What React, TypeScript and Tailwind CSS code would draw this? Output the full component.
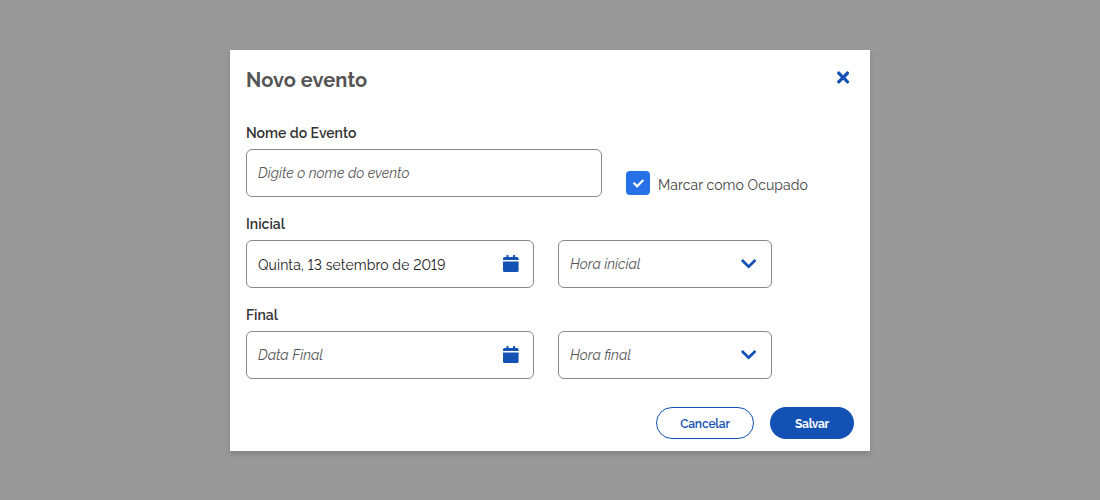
import type { ReactNode } from "react";
import { FaCheck, FaChevronDown, FaTimes } from "react-icons/fa";

function Label({ children }: { children: ReactNode }) {
  return <div className="mb-[6px] h-5 whitespace-nowrap text-[14px] leading-[20px] font-semibold text-[#333]">{children}</div>;
}

function Field({ children, icon, className }: { children: ReactNode; icon?: ReactNode; className: string }) {
  return (
    <div className={`flex h-12 items-center justify-between rounded-md border border-[#888] bg-white pl-[11px] pr-[15px] ${className}`}>
      {children}
      {icon}
    </div>
  );
}

function Placeholder({ children }: { children: ReactNode }) {
  return <span className="whitespace-nowrap text-[14px] leading-5 font-normal italic text-[#555]">{children}</span>;
}

const calendar = (
  <svg viewBox="0 0 16 17" className="-mr-px -mt-px h-[17px] w-4 fill-[#1351b4]">
    <path d="M3.4.5Q3.4 0 3.9 0H5Q5.5 0 5.5.5V2H10V.5Q10 0 10.5 0H11.6Q12.1 0 12.1.5V2H14Q15.6 2 15.6 3.6V5H0V3.6Q0 2 1.6 2H3.4Z" />
    <path d="M0 6.4H15.6V15.4Q15.6 17 14 17H1.6Q0 17 0 15.4Z" />
  </svg>
);
const chevron = <FaChevronDown className="-mt-px h-[17.5px] w-[15.3px] text-[#1351b4]" />;

export default function App() {
  return (
    <main className="flex h-[500px] w-[1100px] justify-center bg-[#999] pt-[50px] font-['Raleway','Lato',sans-serif] lining-nums">
      <section className="flex h-[401px] w-[640px] flex-col bg-white px-4 shadow-[0_3px_6px_rgba(0,0,0,0.16)]">
        <header className="flex h-[73px] items-start justify-between pt-[17px]">
          <h1 className="whitespace-nowrap text-[20px] leading-[26px] font-bold tracking-[0.08px] text-[#555]">Novo evento</h1>
          <button aria-label="Fechar" className="mr-[5px] mt-px text-[#1351b4]">
            <FaTimes className="h-[19px] w-[12.3px]" />
          </button>
        </header>

        <div className="flex h-[91px] gap-6">
          <div>
            <Label>Nome do Evento</Label>
            <Field className="w-[356px]">
              <Placeholder>Digite o nome do evento</Placeholder>
            </Field>
          </div>
          <label className="mt-12 flex h-6 items-center gap-2 self-start">
            <span className="flex size-6 items-center justify-center rounded-[4px] bg-[#2670e8]">
              <FaCheck className="size-[11px] text-white" />
            </span>
            <span className="whitespace-nowrap pt-1 text-[14px] leading-5 tracking-[0.07px] text-[#444]">Marcar como Ocupado</span>
          </label>
        </div>

        <div className="flex h-[91px] items-start gap-6">
          <div>
            <Label>Inicial</Label>
            <Field className="w-[288px]" icon={calendar}>
              <span className="whitespace-nowrap pt-[2px] text-[14px] leading-5 tracking-[0.1px] text-[#222]">Quinta, 13 setembro de 2019</span>
            </Field>
          </div>
          <Field className="mt-[26px] w-[214px]" icon={chevron}>
            <Placeholder>Hora inicial</Placeholder>
          </Field>
        </div>

        <div className="flex h-[102px] items-start gap-6">
          <div>
            <Label>Final</Label>
            <Field className="w-[288px]" icon={calendar}>
              <Placeholder>Data Final</Placeholder>
            </Field>
          </div>
          <Field className="mt-[26px] w-[214px]" icon={chevron}>
            <Placeholder>Hora final</Placeholder>
          </Field>
        </div>

        <footer className="flex justify-end gap-4">
          <button className="h-8 w-[98px] rounded-full border border-[#1351b4] pt-px text-[12px] font-semibold tracking-[-0.15px] text-[#1351b4]">Cancelar</button>
          <button className="h-8 w-[84px] rounded-full bg-[#1351b4] pt-px text-[12px] font-bold tracking-[-0.3px] text-white">Salvar</button>
        </footer>
      </section>
    </main>
  );
}
